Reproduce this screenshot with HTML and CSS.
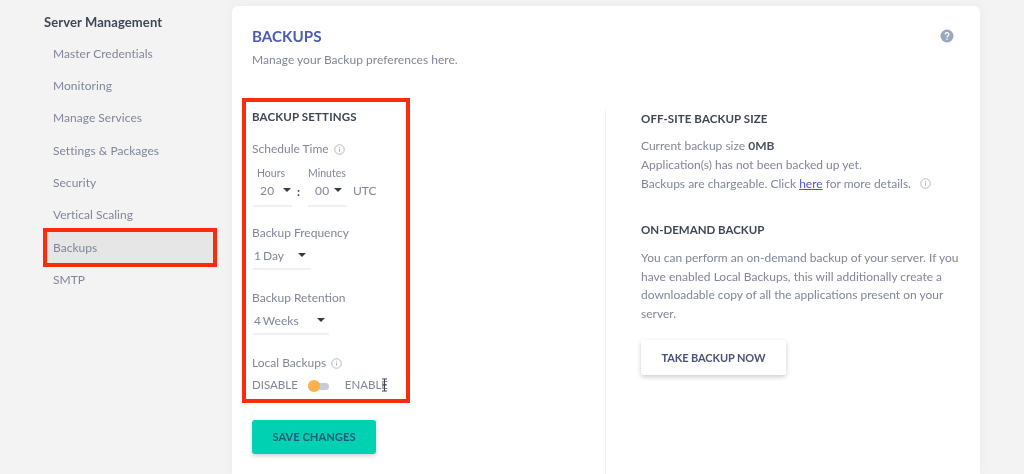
FILE: index.html
```html
<!DOCTYPE html>
<html lang="en">
<head>
<meta charset="utf-8">
<title>Backups</title>
<link rel="stylesheet" href="styles.css">
</head>
<body>
<div class="page">
  <nav class="side">
    <h2 class="side-title">Server Management</h2>
    <a class="side-item">Master Credentials</a>
    <a class="side-item">Monitoring</a>
    <a class="side-item">Manage Services</a>
    <a class="side-item">Settings &amp; Packages</a>
    <a class="side-item">Security</a>
    <a class="side-item">Vertical Scaling</a>
    <a class="side-item side-active">Backups</a>
    <a class="side-item">SMTP</a>
  </nav>
  <main class="card">
    <header class="card-head">
      <div>
        <h1 class="card-title">BACKUPS</h1>
        <p class="card-sub">Manage your Backup preferences here.</p>
      </div>
      <svg class="help" viewBox="0 0 14 14" width="14" height="14"><circle cx="7" cy="7" r="6.5" fill="#9aa8bd"/><path d="M5.2 5.5a1.8 1.8 0 1 1 2.7 1.5c-.6.4-.9.7-.9 1.4" fill="none" stroke="#fff" stroke-width="1.3"/><circle cx="7" cy="10.3" r=".8" fill="#fff"/></svg>
    </header>
    <div class="cols">
      <div class="left">
        <section class="settings">
          <h3 class="sec-title">BACKUP SETTINGS</h3>
          <div class="label lab-first">Schedule Time <svg class="info" viewBox="0 0 12 12" width="11" height="11"><circle cx="6" cy="6" r="5.2" fill="none" stroke="#a9adb8" stroke-width=".9"/><path d="M6 5.2v3.2M6 3.2v1" stroke="#a9adb8" stroke-width="1"/></svg></div>
          <div class="time">
            <div class="time-col"><span class="mini mini-h">Hours</span><div class="sel sel-h"><span>20</span><i class="caret"></i></div></div>
            <span class="colon">:</span>
            <div class="time-col"><span class="mini">Minutes</span><div class="sel sel-m"><span>00</span><i class="caret"></i></div></div>
            <span class="utc">UTC</span>
          </div>
          <div class="label lab-freq">Backup Frequency</div>
          <div class="sel sel-freq"><span>1 Day</span><i class="caret"></i></div>
          <div class="label lab-next">Backup Retention</div>
          <div class="sel sel-ret"><span>4 Weeks</span><i class="caret"></i></div>
          <div class="label lab-next">Local Backups <svg class="info" viewBox="0 0 12 12" width="11" height="11"><circle cx="6" cy="6" r="5.2" fill="none" stroke="#a9adb8" stroke-width=".9"/><path d="M6 5.2v3.2M6 3.2v1" stroke="#a9adb8" stroke-width="1"/></svg></div>
          <div class="toggle-row">
            <span>DISABLE</span>
            <span class="toggle"><i class="knob"></i></span>
            <span class="enable">ENABLE<svg class="cursor" viewBox="0 0 7 14" width="7" height="14"><path d="M1 1h5M1 13h5M3.5 1v12M1.5 7h4" stroke="#3c4254" stroke-width="1" fill="none"/></svg></span>
          </div>
        </section>
        <button class="btn-save">SAVE CHANGES</button>
      </div>
      <div class="right">
        <h3 class="sec-title sec-off">OFF-SITE BACKUP SIZE</h3>
        <div class="size-lines">
          <p>Current backup size <b class="size">0MB</b></p>
          <p>Application(s) has not been backed up yet.</p>
          <p>Backups are chargeable. Click <a class="link">here</a> for more details. <svg class="info info-gap" viewBox="0 0 12 12" width="11" height="11"><circle cx="6" cy="6" r="5.2" fill="none" stroke="#a9adb8" stroke-width=".9"/><path d="M6 5.2v3.2M6 3.2v1" stroke="#a9adb8" stroke-width="1"/></svg></p>
        </div>
        <h3 class="sec-title sec-demand">ON-DEMAND BACKUP</h3>
        <p class="para">You can perform an on-demand backup of your server. If you have enabled Local Backups, this will additionally create a downloadable copy of all the applications present on your server.</p>
        <button class="btn-take">TAKE BACKUP NOW</button>
      </div>
    </div>
  </main>
</div>
</body>
</html>
```
FILE: styles.css
```css
* { box-sizing: border-box; }
html, body { margin: 0; height: 100%; overflow: hidden; }
body {
  background: #f3f3f4;
  font-family: Lato, "Open Sans", sans-serif;
  font-size: 12px;
  color: #80869a;
  filter: blur(.35px);
}
h1, h2, h3, p { margin: 0; }
.page { display: flex; height: 474px; padding-left: 44px; align-items: flex-start; }

.side { width: 188px; flex: none; padding-top: 13px; }
.side-title { font-size: 13px; line-height: 18px; font-weight: 700; color: #3f4656; margin-bottom: 6.5px; letter-spacing: .1px; white-space: nowrap; }
.side-item { display: block; height: 32.4px; line-height: 32.4px; padding-left: 9px; letter-spacing: .03px; color: #80869a; width: 173px; white-space: nowrap; }
.side-active { height: 39px; line-height: 31px; margin: -3.5px 0 -3.1px -1px; width: 174px; padding-left: 6px; border: 4px solid #fb2c0e; background: #e6e6e7; }

.card { width: 748px; height: 468px; margin-top: 6px; background: #fff; border-radius: 6px 6px 0 0; box-shadow: 0 0 12px rgba(0,0,0,.04); padding: 20px 26px 0 20px; }
.card-head { display: flex; justify-content: space-between; align-items: flex-start; height: 72px; }
.card-title { font-size: 15.2px; line-height: 20px; font-weight: 700; color: #4a5bb5; }
.card-sub { margin-top: 5px; line-height: 18px; letter-spacing: .03px; }
.help { margin-top: 3px; }

.cols { display: flex; }
.left { width: 353px; flex: none; }
.right { flex: 1; border-left: 1px solid #f1f1f3; padding: 0 0 0 35px; height: 364px; margin-top: 12px; }

.settings { width: 168px; height: 305px; margin-left: -10px; border: 4px solid #fb2c0e; padding: 7px 0 0 6px; }
.sec-title { font-size: 11.5px; line-height: 16px; font-weight: 700; color: #3f4656; letter-spacing: .15px; white-space: nowrap; }
.sec-off { margin-top: 1px; letter-spacing: .1px; }
.label { line-height: 16px; white-space: nowrap; display: flex; align-items: center; gap: 5px; }
.lab-first { margin-top: 16px; }
.lab-freq { margin-top: 18px; }
.lab-next { margin-top: 20px; }
.info { flex: none; }
.info-gap { margin-left: 6px; vertical-align: -1px; }

.time { display: flex; align-items: flex-end; margin-top: 9px; }
.time-col { display: flex; flex-direction: column; width: 39px; }
.time-col:first-child { margin-left: 1px; }
.mini { font-size: 10.5px; line-height: 14px; white-space: nowrap; }
.mini-h { padding-left: 4px; }
.colon { width: 16px; padding-left: 5px; line-height: 20px; font-weight: 700; color: #3f4656; margin-bottom: 5px; }
.utc { margin-left: 6px; line-height: 17px; margin-bottom: 8px; }

.sel { display: flex; align-items: center; justify-content: space-between; height: 25px; border-bottom: 2px solid #f0f0f1; margin-left: 1px; padding: 0 5px 3px 1px; word-spacing: -1px; }
.sel-h, .sel-m { height: 26px; margin: 1px 0 0; padding: 0 1px 6px 7px; letter-spacing: .4px; }
.sel-m { padding-right: 5px; }
.sel-freq { width: 58px; margin-top: 4px; }
.sel-ret { width: 76px; margin-top: 4px; padding-right: 4px; }
.caret { width: 0; height: 0; border-left: 4px solid transparent; border-right: 4px solid transparent; border-top: 4px solid #333a49; }

.toggle-row { display: flex; align-items: center; margin-top: 6px; line-height: 16px; font-size: 11.5px; }
.toggle { position: relative; width: 21px; height: 7px; margin: 2px 16px 0 10px; background: #c8ccd6; border-radius: 4px; }
.knob { position: absolute; left: 0; top: -3px; width: 12px; height: 12px; border-radius: 50%; background: #fbb04a; }
.enable { position: relative; }
.cursor { position: absolute; right: 0; top: 1px; }

.btn-save { display: block; width: 124px; height: 34px; margin-top: 17px; border: 0; border-radius: 3px; background: #00d1b2; color: #1d5a7c; font: 700 11.2px/34px Lato, sans-serif; box-shadow: 0 2px 4px rgba(0,0,0,.18); padding: 0; }

.size-lines { margin-top: 9px; line-height: 19px; white-space: nowrap; }
.size { color: #4a5060; font-weight: 700; }
.link { color: #4a5bd0; text-decoration: underline; }
.sec-demand { margin-top: 29px; letter-spacing: 0; }
.para { margin-top: 11px; width: 325px; line-height: 18.5px; }
.btn-take { display: block; width: 145px; height: 35px; margin-top: 17px; border: 0; border-radius: 2px; background: #fff; color: #4a5378; font: 700 11px/35px Lato, sans-serif; letter-spacing: -.1px; box-shadow: 0 2px 5px rgba(0,0,0,.2); padding: 0; }
```
